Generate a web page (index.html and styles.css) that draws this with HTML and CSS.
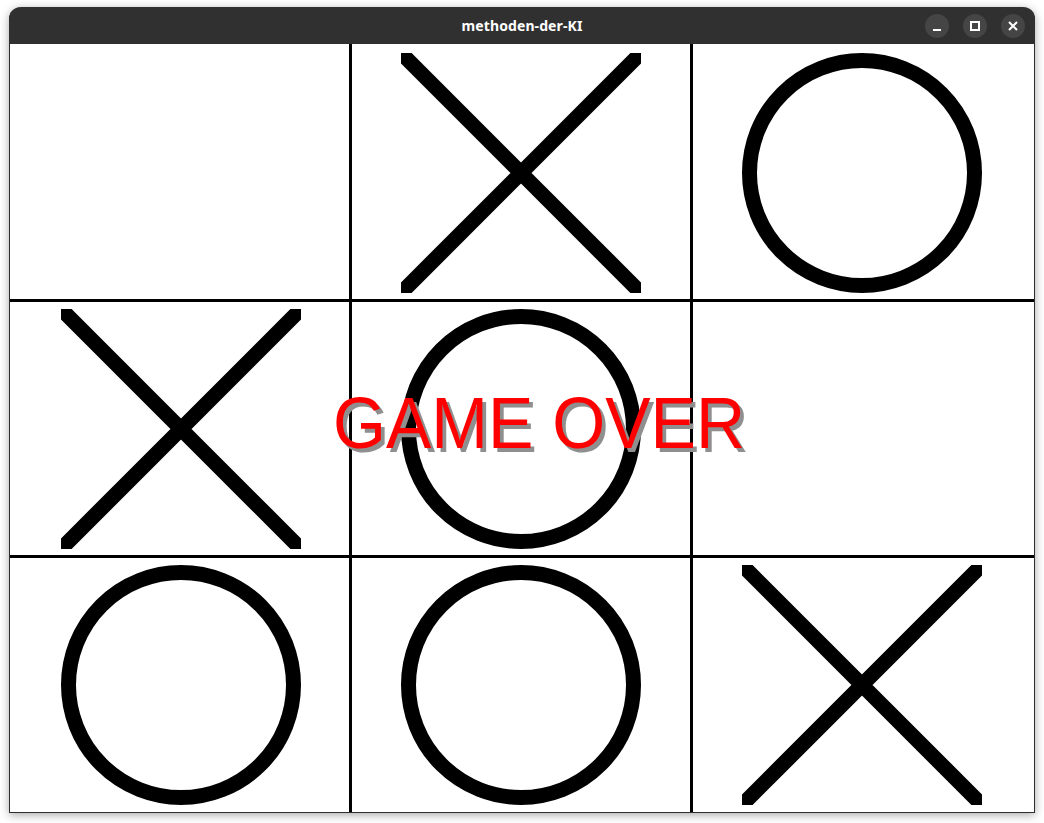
FILE: index.html
```html
<!DOCTYPE html>
<html lang="de">
<head>
<meta charset="utf-8">
<title>methoden-der-KI</title>
<link rel="stylesheet" href="styles.css">
</head>
<body>
<div class="window">
  <header class="titlebar">
    <div class="spacer"></div>
    <div class="title">methoden-der-KI</div>
    <div class="controls">
      <button class="ctl" aria-label="Minimieren">
        <svg width="24" height="24" viewBox="0 0 24 24"><rect x="8" y="15" width="8" height="2" fill="#fff"/></svg>
      </button>
      <button class="ctl" aria-label="Maximieren">
        <svg width="24" height="24" viewBox="0 0 24 24"><rect x="8" y="8" width="8" height="8" fill="none" stroke="#fff" stroke-width="2"/></svg>
      </button>
      <button class="ctl" aria-label="Schließen">
        <svg width="24" height="24" viewBox="0 0 24 24"><path d="M8 8L16 16M16 8L8 16" stroke="#fff" stroke-width="2"/></svg>
      </button>
    </div>
  </header>
  <main class="board">
    <svg class="grid" width="1024" height="768" viewBox="0 0 1024 768">
      <defs>
        <symbol id="mx" viewBox="0 0 240 240" overflow="hidden">
          <path d="M0 0L240 240M240 0L0 240" stroke="#000" stroke-width="15" stroke-linecap="square"/>
        </symbol>
        <symbol id="mo" viewBox="0 0 240 240">
          <circle cx="120" cy="120" r="112.5" fill="none" stroke="#000" stroke-width="15"/>
        </symbol>
      </defs>
      <rect x="339" y="0" width="3" height="768" fill="#000"/>
      <rect x="680" y="0" width="3" height="768" fill="#000"/>
      <rect x="0" y="255" width="1024" height="3" fill="#000"/>
      <rect x="0" y="511" width="1024" height="3" fill="#000"/>
      <use href="#mx" x="391" y="9" width="240" height="240"/>
      <use href="#mo" x="732" y="9" width="240" height="240"/>
      <use href="#mx" x="51" y="265" width="240" height="240"/>
      <use href="#mo" x="391" y="265" width="240" height="240"/>
      <use href="#mo" x="51" y="521" width="240" height="240"/>
      <use href="#mo" x="391" y="521" width="240" height="240"/>
      <use href="#mx" x="732" y="521" width="240" height="240"/>
    </svg>
    <div class="gameover">GAME OVER</div>
  </main>
</div>
</body>
</html>
```

FILE: styles.css
```css
html, body {
  margin: 0;
  padding: 0;
}
body {
  background: #ffffff;
  width: 1044px;
  height: 823px;
  overflow: hidden;
}
.window {
  margin: 7px 0 0 9px;
  width: 1024px;
  border: 1px solid #2e2e2e;
  border-top: none;
  border-radius: 12px 12px 0 0;
  box-shadow: 0 2px 10px rgba(0, 0, 0, 0.35);
  background: #fff;
}
.titlebar {
  height: 37px;
  margin: 0 -1px;
  background: #303030;
  border-radius: 12px 12px 0 0;
  display: grid;
  grid-template-columns: 1fr auto 1fr;
  align-items: center;
}
.title {
  font-family: "Noto Sans", "Open Sans", sans-serif;
  font-weight: 700;
  font-size: 14px;
  color: #ffffff;
  letter-spacing: 0.1px;
}
.controls {
  display: flex;
  justify-content: flex-end;
  gap: 14px;
  padding-right: 10px;
}
.ctl {
  width: 24px;
  height: 24px;
  padding: 0;
  border: none;
  border-radius: 50%;
  background: #454545;
  display: block;
}
.ctl svg {
  display: block;
}
.board {
  position: relative;
  width: 1024px;
  height: 768px;
  background: #fff;
}
.grid {
  display: block;
}
.gameover {
  position: absolute;
  left: 323px;
  top: 343px;
  font-family: "Liberation Sans", Arial, sans-serif;
  font-size: 72px;
  line-height: 1;
  color: #ff0000;
  text-shadow: 4px 4px 0 #8f8f8f;
  white-space: nowrap;
  transform: scaleX(0.945);
  transform-origin: 0 0;
}
```
